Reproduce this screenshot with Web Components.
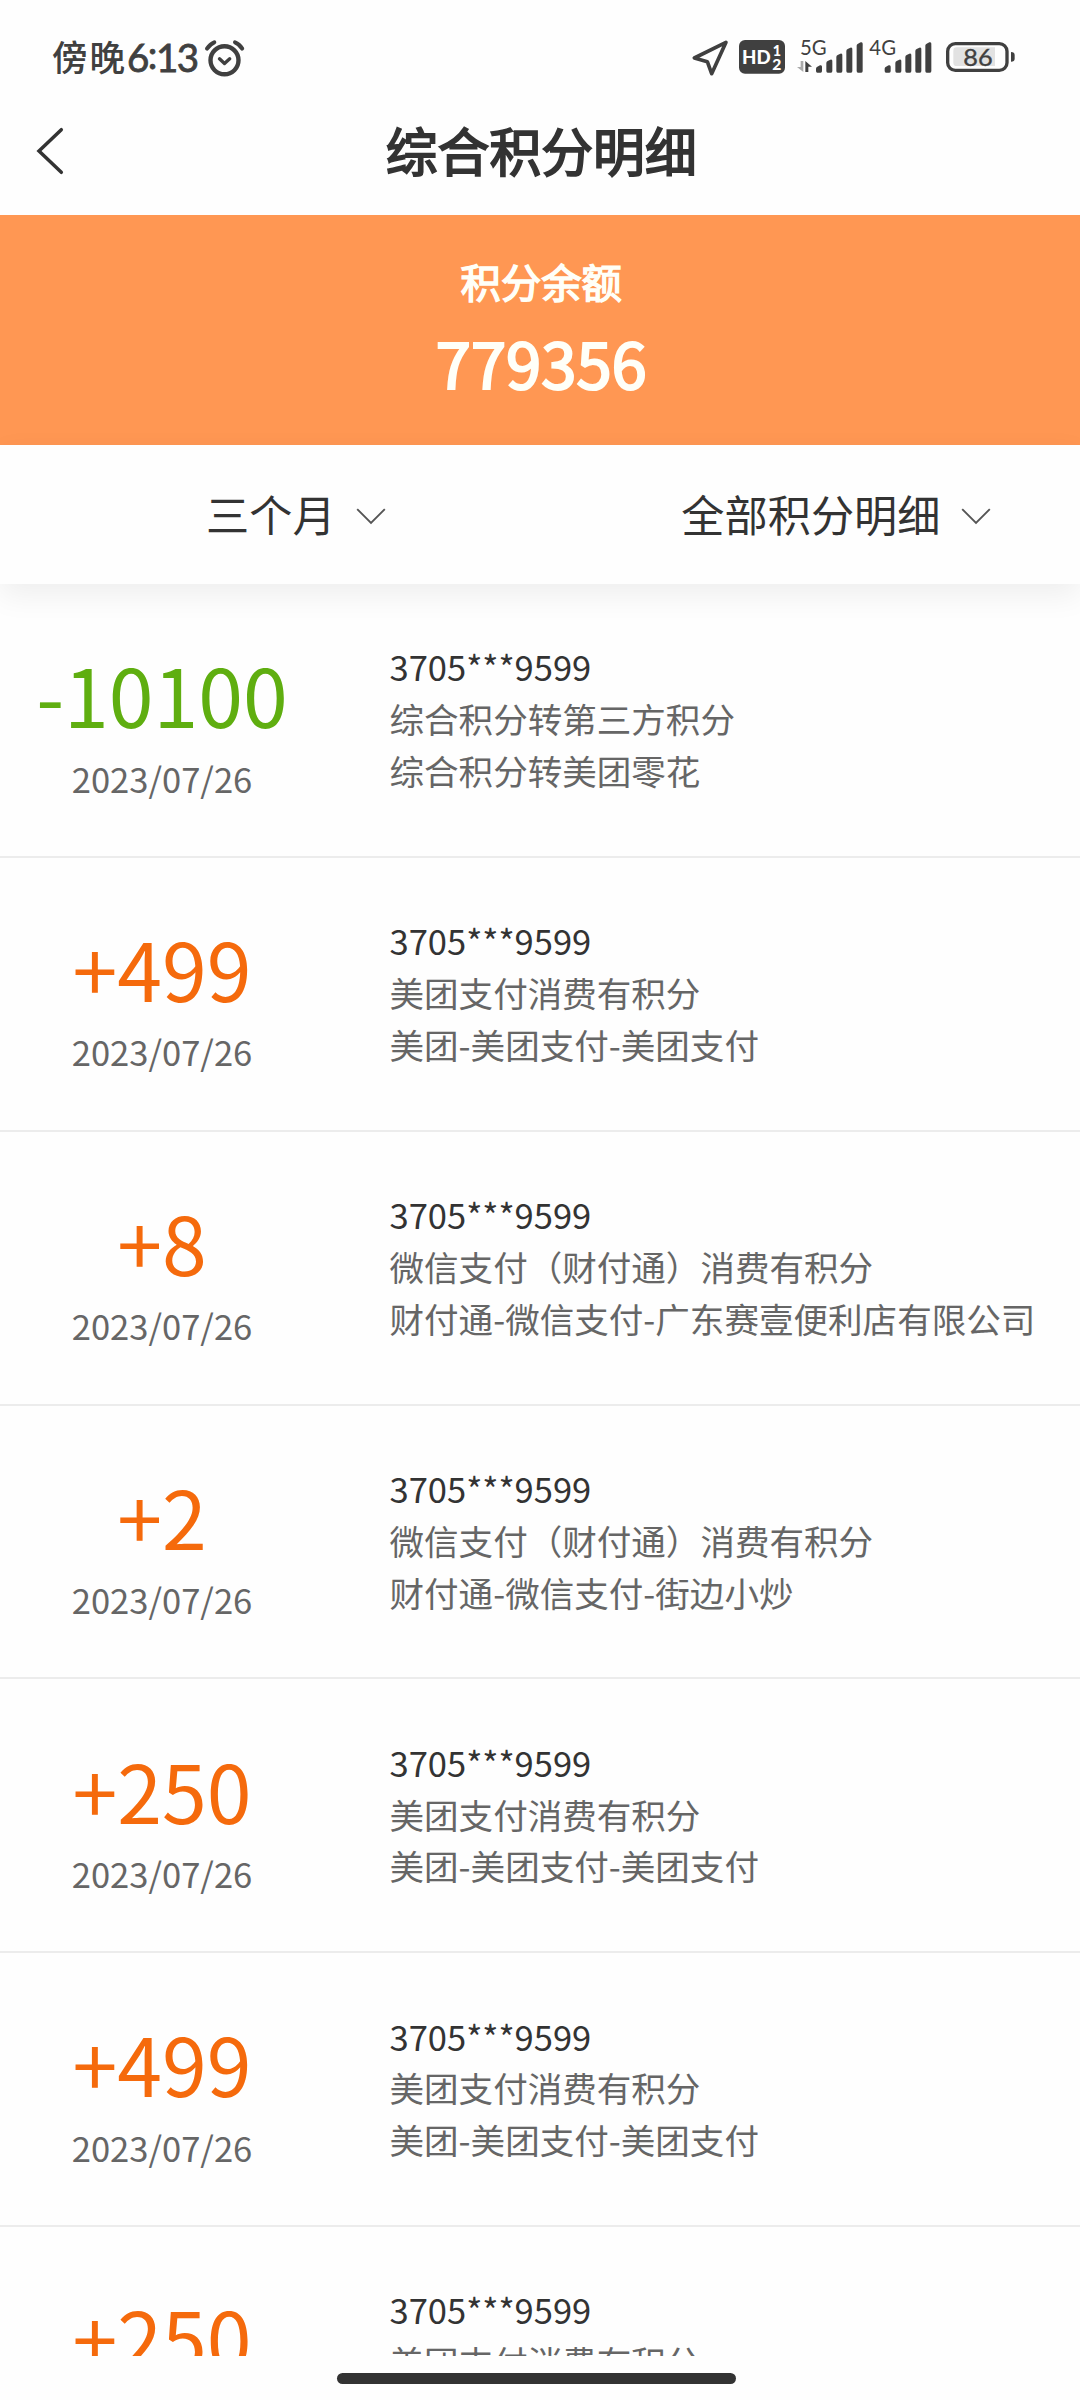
<!DOCTYPE html>
<html lang="zh-CN">
<head>
<meta charset="utf-8">
<title>综合积分明细</title>
<style>
html,body{margin:0;padding:0;background:#fefefe}
body{width:1080px;height:2400px;overflow:hidden;font-family:"Noto Sans CJK SC",sans-serif;color:#333}
</style>
</head>
<body>
<points-page></points-page>
<script>
const define = (name, html) => customElements.define(name, class extends HTMLElement {
  constructor() {
    super();
    const t = document.createElement('template');
    t.innerHTML = html;
    this.attachShadow({ mode: 'open' }).appendChild(t.content.cloneNode(true));
  }
});

// One cellular indicator: five slanted bars growing to the right.
const bars = xs => xs.map((x, i) => {
  const top = [137, 120, 102, 84, 68][i];
  return `<path d="M${x} ${top + 9}q0-4 4-6l8-4q6-2 6 4v${150 - top}q0 5-4 5h-10q-4 0-4-5z"/>`;
}).join('');

define('status-bar', `
<style>
:host{display:flex;height:88px;box-sizing:border-box;padding:0 40px 0 52px;justify-content:space-between;color:#404040}
.left{display:flex;height:88px;align-items:center}
.day{font-size:35.5px;font-weight:500;letter-spacing:2px;line-height:52px;margin-top:23px}
.time{font:400 38.5px/52px "Lato","Noto Sans CJK SC",sans-serif;-webkit-text-stroke:.8px #404040;letter-spacing:-1.5px;margin-top:25px}
.colon{vertical-align:3px;line-height:1}
.alarm{margin:28px 0 0 5px}
svg{display:block;overflow:visible}
</style>
<div class="left">
  <span class="day">傍晚</span><span class="time">6<span class="colon">:</span>13</span>
  <svg class="alarm" width="42" height="38" viewBox="203 37 42 38" fill="none" stroke="#404040" stroke-linecap="round" stroke-linejoin="round">
    <circle cx="224.5" cy="58.3" r="14" stroke-width="4.4"/>
    <path d="M219.5 56.8l5 4.6 5.2-4.6" stroke-width="3.4"/>
    <path d="M207 46.6q3-4.5 7.3-6.3M235 40.3q4.5 1.8 7.2 6.3" stroke-width="4"/>
  </svg>
</div>
<svg width="360" height="80" viewBox="0 -60 1080 240" fill="#404040">
  <path d="M138 67L43 114 82 125 95 161Z" fill="none" stroke="#404040" stroke-width="11" stroke-linejoin="round"/>
  <rect x="177" y="60" width="138" height="101" rx="18"/>
  <g fill="#fff" font-family="Lato,sans-serif" font-weight="900">
    <text x="186" y="132" font-size="58" textLength="86" lengthAdjust="spacingAndGlyphs">HD</text>
    <text x="278" y="107" font-size="43">1</text><text x="277" y="150" font-size="47">2</text>
  </g>
  <g font-family="Lato,sans-serif" font-size="61">
    <text x="360" y="105" textLength="80" lengthAdjust="spacingAndGlyphs">5G</text>
    <text x="568" y="105" textLength="80" lengthAdjust="spacingAndGlyphs">4G</text>
  </g>
  <path d="M362 123h8v33l-19-15h11z" fill="#aaa"/>
  <path d="M376 156v-33l20 17h-11v16z"/>
  ${bars([408, 439, 469, 499, 530])}
  ${bars([614, 646, 676, 706, 736])}
  <rect x="803" y="71" width="178" height="80" rx="23" fill="none" stroke="#404040" stroke-width="10"/>
  <path d="M830 82h115v56H830q-10 0-10-10V92q0-10 10-10z" fill="#e2e2e2"/>
  <path d="M993 96q11 0 11 9v11q0 9-11 9z"/>
  <text x="850" y="138" font-family="Lato,sans-serif" font-size="69" textLength="88" lengthAdjust="spacingAndGlyphs" stroke="#404040" stroke-width="1">86</text>
</svg>`);

define('nav-bar', `
<style>
:host{display:grid;grid-template-columns:100px 1fr 100px;height:127px;box-sizing:border-box;padding-bottom:3px;align-items:center}
h1{margin:0;padding-left:2.5px;text-align:center;font-size:51.84px;font-weight:400;line-height:76px;-webkit-text-stroke:1.9px #333}
svg{display:block;margin:2px 0 0 36px}
</style>
<svg width="28" height="48" viewBox="36 127 28 48" fill="none" stroke="#333" stroke-width="3.5" stroke-linecap="round" stroke-linejoin="miter"><path d="M61.3 129.7L39 151 61.3 172.3"/></svg>
<h1><slot></slot></h1>`);

define('points-balance', `
<style>
:host{display:flex;flex-direction:column;align-items:center;height:230px;box-sizing:border-box;padding:35.7px 0 0 2.5px;background:#ff9753;color:#fffff8}
.label{font-size:40.32px;line-height:60.5px;-webkit-text-stroke:1.5px #fffff8}
.value{font-size:63.36px;line-height:102px;-webkit-text-stroke:2.2px #fffff8}
</style>
<div class="label"><slot name="label"></slot></div><div class="value"><slot></slot></div>`);

define('filter-option', `
<style>
:host{display:flex;align-items:center;font-size:43.2px;line-height:64px}
svg{display:block;margin:6.5px 0 0 20.5px}
</style>
<span><slot></slot></span>
<svg width="30" height="17" viewBox="0 0 30 17" fill="none" stroke="#555" stroke-width="1.9"><path d="M1.2 1.2L15 15 28.8 1.2"/></svg>`);

define('filter-bar', `
<style>
:host{display:flex;height:139px;box-sizing:border-box;padding:0 89px 3px 206px;justify-content:space-between;background:#fefefe;box-shadow:0 11px 29px rgba(0,0,0,.065)}
</style><slot></slot>`);

define('points-entry', `
<style>
:host{display:grid;grid-template-columns:324px 1fr;height:273.85px;box-sizing:border-box;border-bottom:2px solid #ececec;font-size:34.56px;line-height:51.84px;color:#666}
.sum{display:flex;flex-direction:column;align-items:center;padding-top:51.2px;white-space:nowrap}
.amount{font-size:80.64px;line-height:116.6px;margin-bottom:.8px;color:#f56a0c}
:host([spent]) .amount{color:#5fae10}
.detail{display:flex;flex-direction:column;padding:57.3px 0 0 65.5px;white-space:nowrap}
.card{color:#333}
</style>
<div class="sum"><span class="amount"><slot name="amount"></slot></span><span><slot name="date"></slot></span></div>
<div class="detail"><span class="card"><slot name="card"></slot></span><span><slot name="type"></slot></span><span><slot name="note"></slot></span></div>`);

define('home-indicator', `
<style>
:host{display:flex;height:44.3px;justify-content:center;padding-right:7px;background:#fefefe}
div{width:399px;height:10.5px;margin-top:17.4px;border-radius:6px;background:#333}
</style><div></div>`);

const entries = [
  ['-10100', '综合积分转第三方积分', '综合积分转美团零花'],
  ['+499', '美团支付消费有积分', '美团-美团支付-美团支付'],
  ['+8', '微信支付（财付通）消费有积分', '财付通-微信支付-广东赛壹便利店有限公司'],
  ['+2', '微信支付（财付通）消费有积分', '财付通-微信支付-街边小炒'],
  ['+250', '美团支付消费有积分', '美团-美团支付-美团支付'],
  ['+499', '美团支付消费有积分', '美团-美团支付-美团支付'],
  ['+250', '美团支付消费有积分', '']
];

define('points-page', `
<style>
:host{display:flex;flex-direction:column;width:1080px;height:2400px}
status-bar,nav-bar,points-balance,filter-bar,home-indicator,points-entry{flex:none}
.list{flex:1;min-height:0;overflow:hidden;display:flex;flex-direction:column}
filter-bar{position:relative}
.list points-entry:last-child .date{display:none}
</style>
<status-bar></status-bar>
<nav-bar>综合积分明细</nav-bar>
<points-balance><span slot="label">积分余额</span>779356</points-balance>
<filter-bar><filter-option>三个月</filter-option><filter-option>全部积分明细</filter-option></filter-bar>
<div class="list">${entries.map(([a, t, n]) => `
<points-entry${a[0] === '-' ? ' spent' : ''}><span slot="amount">${a}</span><span slot="date" class="date">2023/07/26</span><span slot="card">3705***9599</span><span slot="type">${t}</span><span slot="note">${n}</span></points-entry>`).join('')}
</div>
<home-indicator></home-indicator>`);
</script>
</body>
</html>
